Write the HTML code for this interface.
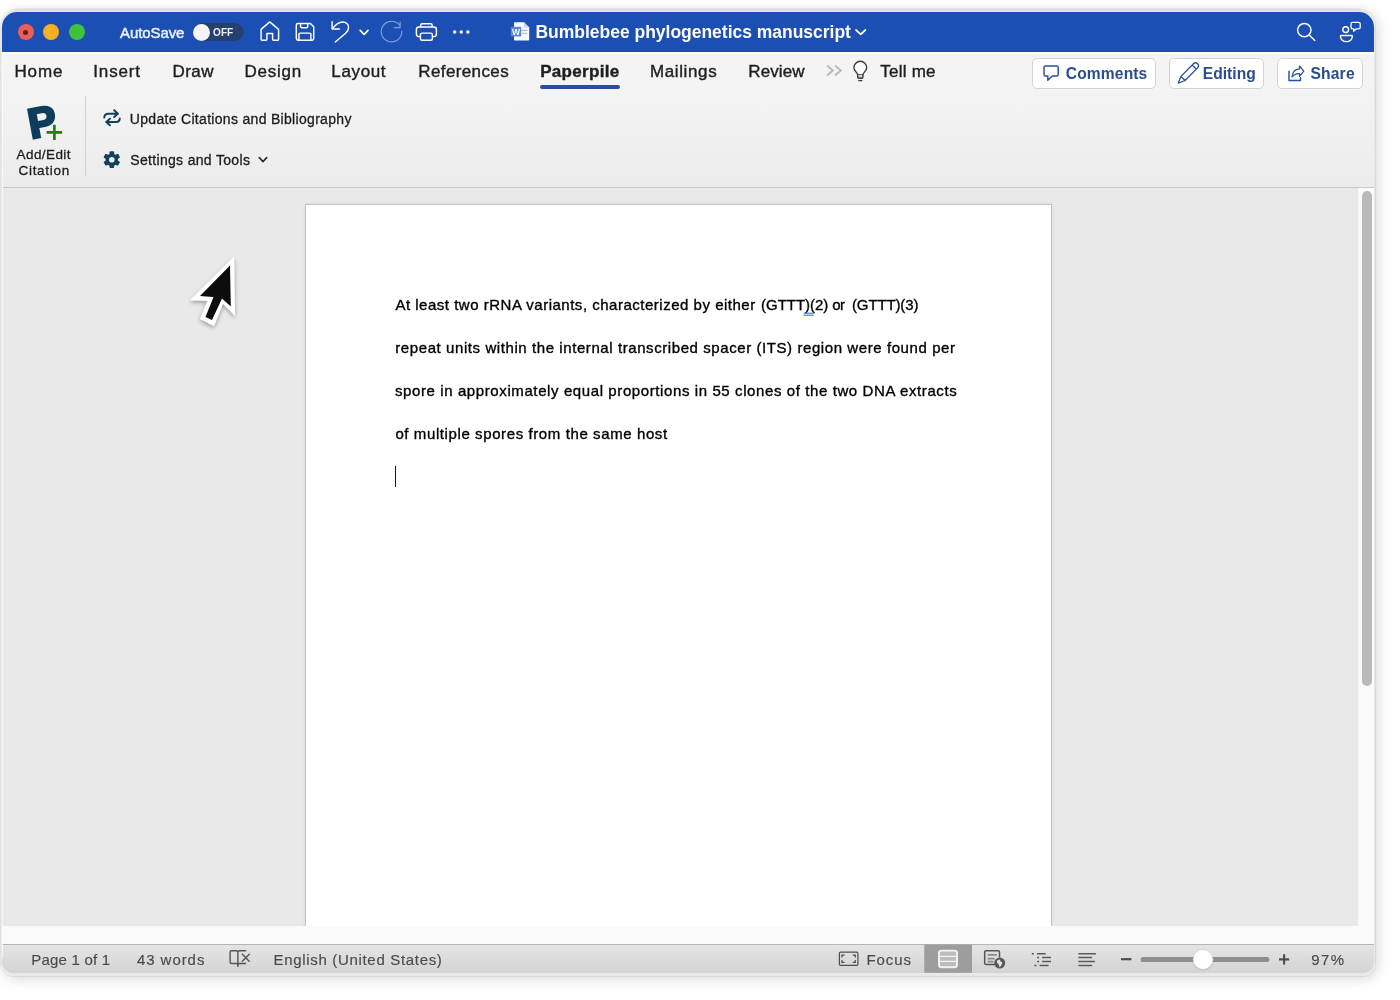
<!DOCTYPE html>
<html lang="en">
<head>
<meta charset="utf-8">
<title>Bumblebee phylogenetics manuscript</title>
<style>
*{box-sizing:border-box;margin:0;padding:0}
html,body{width:1400px;height:1000px;overflow:hidden;background:#fff}
body{font-family:"Liberation Sans",sans-serif;color:#1d1d1d;position:relative}
.abs{position:absolute}
.t{position:absolute;white-space:nowrap;line-height:1;transform-origin:0 50%;will-change:opacity;-webkit-font-smoothing:antialiased}
#ring{position:absolute;left:1px;top:9px;width:1374px;height:966.5px;border-radius:17px 17px 12.5px 12.5px;background:linear-gradient(#dedede,#e8e8e8 6px,#e8e8e8);
 box-shadow:0 0 0 1px rgba(0,0,10,.05),0 6px 15px rgba(0,0,20,.05),0 1px 12px rgba(0,0,20,.07),7px 2px 12px rgba(0,0,30,.055)}
#win{position:absolute;left:2px;top:12px;width:1372px;height:961.2px;border-radius:15px 15px 11px 11px;overflow:hidden;background:#f3f3f3}
/* title bar */
#title{position:absolute;left:0;top:0;width:1372px;height:40.6px;background:#1b4fb4}
.light{position:absolute;top:12px;width:16px;height:16px;border-radius:50%}
/* tab row + ribbon */
#ribbon{position:absolute;left:0;top:40px;width:1372px;height:135px;background:linear-gradient(#fff 0,#fff 1.5px,#f4f4f4 2px,#f3f3f3 35%,#eeeeee 80%,#ececec 95%,#e9ebee 100%)}
#ribbonline{position:absolute;left:0;top:174.5px;width:1372px;height:1.5px;background:linear-gradient(#d6d8db,#c6c9cd 50%,#c9ccd0)}
.tab{font-size:17px;color:#1f1f1f;top:50.8px;-webkit-text-stroke:.4px #1f1f1f}
.btn{position:absolute;top:46px;height:31px;background:#fff;border:1px solid #d4d4d4;border-radius:5px}
.btxt{font-weight:700;font-size:15.6px;color:#2a4d8d;top:54.1px}
.rtxt{font-size:14px;color:#1c1c1c;-webkit-text-stroke:.3px #1c1c1c}
/* document area */
#docbg{position:absolute;left:0;top:176px;width:1356px;height:738px;background:#e9e9e9}
#vtrack{position:absolute;left:1356px;top:176px;width:16px;height:757px;background:#fafafa}
#vthumb{position:absolute;left:1360px;top:179px;width:10px;height:495px;border-radius:5px;background:#b9b9b9}
#hstrip{position:absolute;left:0;top:914px;width:1372px;height:19px;background:#fafafa}
#page{position:absolute;left:302.6px;top:191.8px;width:747.6px;height:722.2px;background:#fff;border:1px solid #c3c3c3;border-bottom:none;
 box-shadow:0 0 3px rgba(0,0,0,.10)}
.doc{font-size:15px;color:#000;-webkit-text-stroke:.35px #000}
/* status bar */
#status{position:absolute;left:0;top:932px;width:1372px;height:30px;background:linear-gradient(#e4e4e4,#d3d3d3);border-top:1px solid #b5b5b5}
.st{font-size:15px;color:#4a4a4a;top:940px;-webkit-text-stroke:.15px #4a4a4a}
</style>
</head>
<body>
<div id="ring"></div>
<div id="win">
  <div id="title">
    <div class="light" style="left:16px;background:#ee5c56"><div class="abs" style="left:5px;top:5.5px;width:5px;height:5px;border-radius:50%;background:#5c231f"></div></div>
    <div class="light" style="left:41px;background:#f5b025"></div>
    <div class="light" style="left:67px;background:#3fc23c"></div>
    <div class="t" id="autosave" style="left:118.1px;top:12.6px;font-size:15px;color:#e9eefa;-webkit-text-stroke:.5px #e9eefa;letter-spacing:-0.11px">AutoSave</div>
    <div class="abs" style="left:191px;top:11px;width:51px;height:18px;border-radius:9px;background:#25406f"></div>
    <div class="abs" style="left:191px;top:11.5px;width:17px;height:17px;border-radius:50%;background:#f4f4f4;box-shadow:0 0 1px rgba(0,0,0,.5)"></div>
    <div class="t" id="off" style="left:211.0px;top:15.6px;font-size:10px;font-weight:700;color:#eef2fa;letter-spacing:0.11px">OFF</div>
    <div class="t" id="doctitle" style="left:533.5px;top:11.6px;font-size:17.5px;font-weight:700;color:#fff;letter-spacing:-0.02px">Bumblebee phylogenetics manuscript</div>
  </div>
  <div id="ribbon"></div>
  <div id="ribbonline"></div>

  <div class="t tab" id="tab1" style="left:12.4px;letter-spacing:0.92px">Home</div>
  <div class="t tab" id="tab2" style="left:91.3px;letter-spacing:0.84px">Insert</div>
  <div class="t tab" id="tab3" style="left:170.5px;letter-spacing:0.42px">Draw</div>
  <div class="t tab" id="tab4" style="left:242.6px;letter-spacing:0.72px">Design</div>
  <div class="t tab" id="tab5" style="left:329.3px;letter-spacing:0.64px">Layout</div>
  <div class="t tab" id="tab6" style="left:416.3px;letter-spacing:0.38px">References</div>
  <div class="t tab" id="tab7" style="left:538.2px;font-weight:700;letter-spacing:0.31px">Paperpile</div>
  <div class="abs" style="left:538px;top:73px;width:80px;height:3.5px;border-radius:2px;background:#2a4f9b"></div>
  <div class="t tab" id="tab8" style="left:648.0px;letter-spacing:0.61px">Mailings</div>
  <div class="t tab" id="tab9" style="left:746.3px;letter-spacing:0.08px">Review</div>
  <div class="t tab" id="tab10" style="left:878.3px;letter-spacing:0.22px">Tell me</div>

  <div class="btn" style="left:1030px;width:124px"></div>
  <div class="btn" style="left:1167px;width:95px"></div>
  <div class="btn" style="left:1275px;width:86px"></div>
  <div class="t btxt" id="b1" style="left:1063.8px;letter-spacing:0.13px">Comments</div>
  <div class="t btxt" id="b2" style="left:1200.7px;letter-spacing:0.05px">Editing</div>
  <div class="t btxt" id="b3" style="left:1308.4px;letter-spacing:0.21px">Share</div>

  <!-- ribbon content -->
  <div class="t" id="addedit" style="left:14.6px;top:136.4px;font-size:13.5px;color:#1c1c1c;-webkit-text-stroke:.3px #1c1c1c;letter-spacing:0.41px">Add/Edit</div>
  <div class="t" id="citation" style="left:16.5px;top:152px;font-size:13.5px;color:#1c1c1c;-webkit-text-stroke:.3px #1c1c1c;letter-spacing:0.70px">Citation</div>
  <div class="abs" style="left:83px;top:84px;width:1px;height:80px;background:#d2d2d2"></div>
  <div class="t rtxt" id="upd" style="left:127.8px;top:100px;letter-spacing:0.31px">Update Citations and Bibliography</div>
  <div class="t rtxt" id="sett" style="left:128.3px;top:141.4px;letter-spacing:0.32px">Settings and Tools</div>

  <!-- document -->
  <div id="docbg"></div>
  <div id="vtrack"></div>
  <div id="vthumb"></div>
  <div id="page"></div>
  <div id="hstrip"></div>
  <div class="t doc" id="l1a" style="left:393.4px;top:285px;letter-spacing:0.51px">At least two rRNA variants, characterized by either</div>
  <div class="t doc" id="l1b" style="left:759.1px;top:285px;letter-spacing:-0.05px">(GTTT)(2)</div>
  <div class="t doc" id="l1c" style="left:830.3px;top:285px;letter-spacing:-0.6px">or</div>
  <div class="t doc" id="l1d" style="left:850.0px;top:285px;letter-spacing:-0.13px">(GTTT)(3)</div>
  <div class="t doc" id="l2" style="left:393.3px;top:328px;letter-spacing:0.58px">repeat units within the internal transcribed spacer (ITS) region were found per</div>
  <div class="t doc" id="l3" style="left:393.0px;top:371px;letter-spacing:0.60px">spore in approximately equal proportions in 55 clones of the two DNA extracts</div>
  <div class="t doc" id="l4" style="left:393.4px;top:414.2px;letter-spacing:0.60px">of multiple spores from the same host</div>
  <div class="abs" style="left:393px;top:454px;width:1.3px;height:21px;background:#111"></div>

  <!-- status bar -->
  <div id="status"></div>
  <div class="abs" style="left:0;top:41px;width:1.2px;height:905px;background:rgba(255,255,255,.65)"></div>
  <div class="t st" id="s1" style="left:29.3px;letter-spacing:0.21px">Page 1 of 1</div>
  <div class="t st" id="s2" style="left:134.9px;letter-spacing:0.95px">43 words</div>
  <div class="t st" id="s3" style="left:271.5px;letter-spacing:0.68px">English (United States)</div>
  <div class="t st" id="s4" style="left:864.4px;letter-spacing:0.91px">Focus</div>
  <div class="t st" id="s5" style="left:1309.3px;letter-spacing:1.37px">97%</div>

  <!-- icon overlay: drawn in page coordinates -->
  <svg class="abs" style="left:-2px;top:-12px;pointer-events:none" width="1400" height="1000" viewBox="0 0 1400 1000" fill="none" stroke-linecap="round" stroke-linejoin="round">
    <!-- title bar icons -->
    <g stroke="#fff" stroke-width="1.45">
      <path d="M269.7 21.9 L278.6 29.4 V39.3 Q278.6 40.3 277.6 40.3 H273.6 Q272.6 40.3 272.6 39.3 V33.4 H266.9 V39.3 Q266.9 40.3 265.9 40.3 H262.1 Q261.1 40.3 261.1 39.3 V29.4 Z"/>
      <path d="M298 23.4 H310.4 L313.7 26.8 V38.6 Q313.7 40.3 312 40.3 H298 Q296.3 40.3 296.3 38.6 V25.1 Q296.3 23.4 298 23.4 Z"/>
      <path d="M300.6 23.6 V26.4 Q300.6 27.7 301.9 27.7 H306.4 Q307.7 27.7 307.7 26.4 V23.6"/>
      <path d="M298.9 40.1 V34.3 Q298.9 33.1 300.1 33.1 H309.7 Q310.9 33.1 310.9 34.3 V40.1"/>
      <path d="M332.1 21.8 V28.9 H339.5"/>
      <path d="M332.6 28.4 C335.5 24.6 338.6 21.9 342.6 21.9 C346.2 21.9 348.6 24.5 348.6 27.6 C348.6 30 347.4 31.6 345.6 33.2 L335.3 42"/>
      <path d="M360.2 30.3 L364.1 34.5 L368 30.3" stroke-width="1.7"/>
      <rect x="416.4" y="26.9" width="20" height="9.7" rx="2.6"/>
      <path d="M420.7 26.7 V25 Q420.7 23.7 422 23.7 H430.8 Q432.1 23.7 432.1 25 V26.7"/>
      <rect x="420.4" y="33.1" width="12" height="7.2" rx="1.8" fill="#1b4fb4"/>
      <circle cx="1304.3" cy="30.1" r="6.7"/>
      <path d="M1309.2 35.1 L1314.8 40.6"/>
      <circle cx="1345.7" cy="29.6" r="2.9"/>
      <path d="M1341.3 35.5 H1351.5 Q1352.5 35.5 1352.4 36.5 C1352 39.6 1349.4 41.6 1346.4 41.6 C1343.4 41.6 1340.8 39.6 1340.4 36.5 Q1340.3 35.5 1341.3 35.5 Z"/>
      <path d="M1352.6 22.4 H1358.6 Q1360.2 22.4 1360.2 24 V27.2 Q1360.2 28.8 1358.6 28.8 H1356.3 L1353.7 31.3 V28.8 H1352.6 Q1351 28.8 1351 27.2 V24 Q1351 22.4 1352.6 22.4 Z" stroke-width="1.3"/>
      <path d="M856 30 L860.7 34.3 L865.4 30" stroke-width="1.7"/>
    </g>
    <g fill="#fff" stroke="none">
      <circle cx="454.7" cy="32" r="1.75"/><circle cx="461.3" cy="32" r="1.75"/><circle cx="467.9" cy="32" r="1.75"/>
    </g>
    <g stroke="#fff" stroke-width="1.2" opacity=".45">
      <path d="M401.8 31.2 A10.3 10.3 0 1 1 399.6 25.2"/>
      <path d="M400.1 22 V27.7 H394.2"/>
    </g>
    <!-- word doc icon -->
    <path d="M515 22.2 H524 L529.2 27.4 V39.6 Q529.2 40.6 528.2 40.6 H515 Q514 40.6 514 39.6 V23.2 Q514 22.2 515 22.2 Z" fill="#fbfcfe" stroke="none"/>
    <path d="M524 22.2 V27.4 H529.2 Z" fill="#c9d6ee" stroke="none"/>
    <path d="M522 30.4 H527 M522 33.2 H527" stroke="#9fb9e6" stroke-width="1.1"/>
    <rect x="510.8" y="26.8" width="10.4" height="9.6" rx="1" fill="#5b88d6" stroke="none"/>
    <text x="516" y="34.6" text-anchor="middle" font-family="Liberation Sans, sans-serif" font-weight="700" font-size="8.5" fill="#fff" stroke="none">W</text>

    <!-- tab row icons -->
    <path d="M827.1 65.6 L832.9 70.6 L827.1 75.5 M835 65.6 L840.8 70.6 L835 75.5" stroke="#b7b7b7" stroke-width="1.9" stroke-linejoin="miter" stroke-linecap="butt"/>
    <g stroke="#3b3b3b" stroke-width="1.4">
      <path d="M857.7 74.9 C857.7 72.6 853.9 71.3 853.9 67.7 A6.4 6.4 0 0 1 866.7 67.7 C866.7 71.3 862.9 72.6 862.9 74.9 Z" fill="#fafafa"/>
      <path d="M857.7 74.9 V77.3 Q857.7 78.3 858.7 78.3 H861.9 Q862.9 78.3 862.9 77.3 V74.9" fill="#cfcfcf"/>
      <path d="M858.8 80.6 H861.8"/>
    </g>
    <g stroke="#2b4f9c" stroke-width="1.45">
      <path d="M1045.5 66 H1056.7 Q1058.2 66 1058.2 67.5 V74.5 Q1058.2 76 1056.7 76 H1052.4 L1047.8 80.3 V76 H1045.5 Q1044 76 1044 74.5 V67.5 Q1044 66 1045.5 66 Z"/>
      <g transform="translate(1178.3 83.1) rotate(-45)" stroke-width="1.3">
        <path d="M0 0 L6.6 -2.9 H24.4 A2.9 2.9 0 0 1 24.4 2.9 H6.6 Z M6.6 -2.9 V2.9 M22.6 -2.9 V2.9"/>
      </g>
      <path d="M1289 71.2 V80.4 H1300.5 V77.6"/>
      <path d="M1299.5 66 L1303.8 71.2 L1299.5 76.3 V73.6 C1296.5 73.4 1293.8 74.6 1292.1 76.9 C1292.3 72.5 1295 69.3 1299.5 68.8 Z" stroke-width="1.25"/>
    </g>

    <!-- ribbon icons -->
    <g transform="translate(33.2 138.6) rotate(-10.5)">
      <text x="-2.3" y="-0.3" font-family="Liberation Sans, sans-serif" font-weight="700" font-size="42.3" fill="#0d3c5d" stroke="#0d3c5d" stroke-width="2.5" stroke-linejoin="miter">P</text>
    </g>
    <path d="M46.6 132.3 H62.2 M54.4 124.7 V140.1" stroke="#148414" stroke-width="2.7" stroke-linecap="butt"/>
    <g stroke="#12405f" stroke-width="2">
      <path d="M104.3 117.5 C104.5 115 105.6 113.8 108 113.8 H117.6"/>
      <path d="M114.2 110.3 L117.8 113.8 L114.2 117"/>
      <path d="M119.8 118.4 C119.6 120.9 118.5 122 116.1 122 H106.6"/>
      <path d="M109.9 118.7 L106.3 122 L109.9 125.3"/>
    </g>
    <g transform="translate(111.8 159.7)">
      <g fill="#12405f" stroke="none">
        <circle r="6.3"/>
        <rect x="-2.3" y="-8.4" width="4.6" height="16.8" rx="1"/>
        <rect x="-2.3" y="-8.4" width="4.6" height="16.8" rx="1" transform="rotate(60)"/>
        <rect x="-2.3" y="-8.4" width="4.6" height="16.8" rx="1" transform="rotate(120)"/>
      </g>
      <circle r="2.8" fill="#f1f1f1" stroke="none"/>
    </g>
    <path d="M259.3 157.6 L263 161.6 L266.7 157.6" stroke="#2a2a2a" stroke-width="1.6"/>

    <!-- blue double underline on )( -->
    <path d="M803.6 313.2 H813.8 M803.6 315.2 H813.8" stroke="#2f60d8" stroke-width="1" stroke-linecap="butt"/>

    <!-- mouse cursor -->
    <g filter="url(#cs)">
      <path d="M234 256.5 L235 316 L223 303.5 L214 326 L200 319 L207.5 301 L190 300 Z" fill="#fff" stroke="none"/>
      <path d="M230 265.5 L230.8 306.5 L222 298.5 L212 320 L205.5 317 L213.5 297 L200 296 Z" fill="#0b0b0b" stroke="none"/>
    </g>
    <defs>
      <filter id="cs" x="-30%" y="-30%" width="160%" height="170%">
        <feDropShadow dx="0" dy="2" stdDeviation="2.2" flood-color="#000" flood-opacity=".35"/>
      </filter>
    </defs>

    <!-- status bar icons -->
    <g stroke="#555" stroke-width="1.4">
      <path d="M237.9 952.3 Q237.7 950.8 236.2 950.8 H231.6 Q230.1 950.8 230.1 952.3 V962 Q230.1 963.5 231.6 963.5 H236 Q237.9 963.5 237.9 965.3 M237.9 952.3 V966.4 M237.9 952.3 Q238.1 950.8 239.6 950.8 H245.6 M237.9 965.3 Q237.9 963.5 239.8 963.5 H245.6"/>
      <path d="M242.4 954.3 L249.2 961.2 M249.2 954.3 L242.4 961.2"/>
    </g>
    <g stroke="#4f4f4f" stroke-width="1.25">
      <rect x="839.4" y="952.1" width="18.5" height="13.3" rx="1.2"/>
      <path d="M842 957.4 V955.1 H844.5 M852.8 955.1 H855.3 V957.4 M855.3 960 V962.4 H852.8 M844.5 962.4 H842 V960" stroke-linecap="butt" stroke-linejoin="miter"/>
    </g>
    <rect x="924.3" y="944.6" width="47.7" height="28.2" fill="#9c9d9c" stroke="none"/>
    <rect x="939" y="950.6" width="18" height="16.6" rx="2.4" fill="#bcbcbc" stroke="#f3f3f3" stroke-width="1.9"/>
    <path d="M940 956.3 H956 M940 961.4 H956" stroke="#f3f3f3" stroke-width="1.2" stroke-linecap="butt"/>
    <g stroke="#575757" stroke-width="1.5">
      <path d="M994.5 964.6 H986 Q984.7 964.6 984.7 963.3 V952 Q984.7 950.7 986 950.7 H998.2 Q999.5 950.7 999.5 952 V957"/>
    </g>
    <path d="M987.6 954.9 H997 M987.6 958.6 H994.6 M987.6 961.6 H993.4" stroke="#8a8a8a" stroke-width="1.7" stroke-linecap="butt"/>
    <circle cx="999.7" cy="963.1" r="5.5" fill="#585858" stroke="none"/>
    <path d="M997.2 960.2 L999.8 959.6 L1000.6 961.6 L1002.4 962.6 L1001.2 965.6 L999.6 967.4 L998.8 964.6 L996.9 962.6 Z" fill="#e4e4e4" stroke="none"/>
    <g stroke="#5a5a5a" stroke-width="1.5" stroke-linecap="butt">
      <path d="M1031.8 953.8 H1033.9 M1037.1 953.8 H1045.7 M1037.1 957.6 H1039.1 M1042.1 957.6 H1051 M1037.1 961.5 H1039.1 M1042.1 961.5 H1051 M1034.3 965.4 H1036.4 M1039.6 965.4 H1048.6"/>
      <path d="M1078.4 953.8 H1096 M1078.4 957.6 H1092.1 M1078.4 961.5 H1094.9 M1078.4 965.4 H1092.1"/>
    </g>
    <!-- zoom slider -->
    <path d="M1121 959.2 H1131.4" stroke="#4f4f4f" stroke-width="2.2" stroke-linecap="butt"/>
    <path d="M1143.2 959.5 H1266.8" stroke="#8d8d8d" stroke-width="5.2"/>
    <circle cx="1203" cy="960.3" r="10.2" fill="rgba(0,0,0,.13)" stroke="none"/>
    <circle cx="1203" cy="959.4" r="10" fill="#fff" stroke="#c4c4c4" stroke-width=".6"/>
    <path d="M1279 959.4 H1289.2 M1284.1 954.3 V964.5" stroke="#4f4f4f" stroke-width="2.2" stroke-linecap="butt"/>
  </svg>
</div>
</body>
</html>
